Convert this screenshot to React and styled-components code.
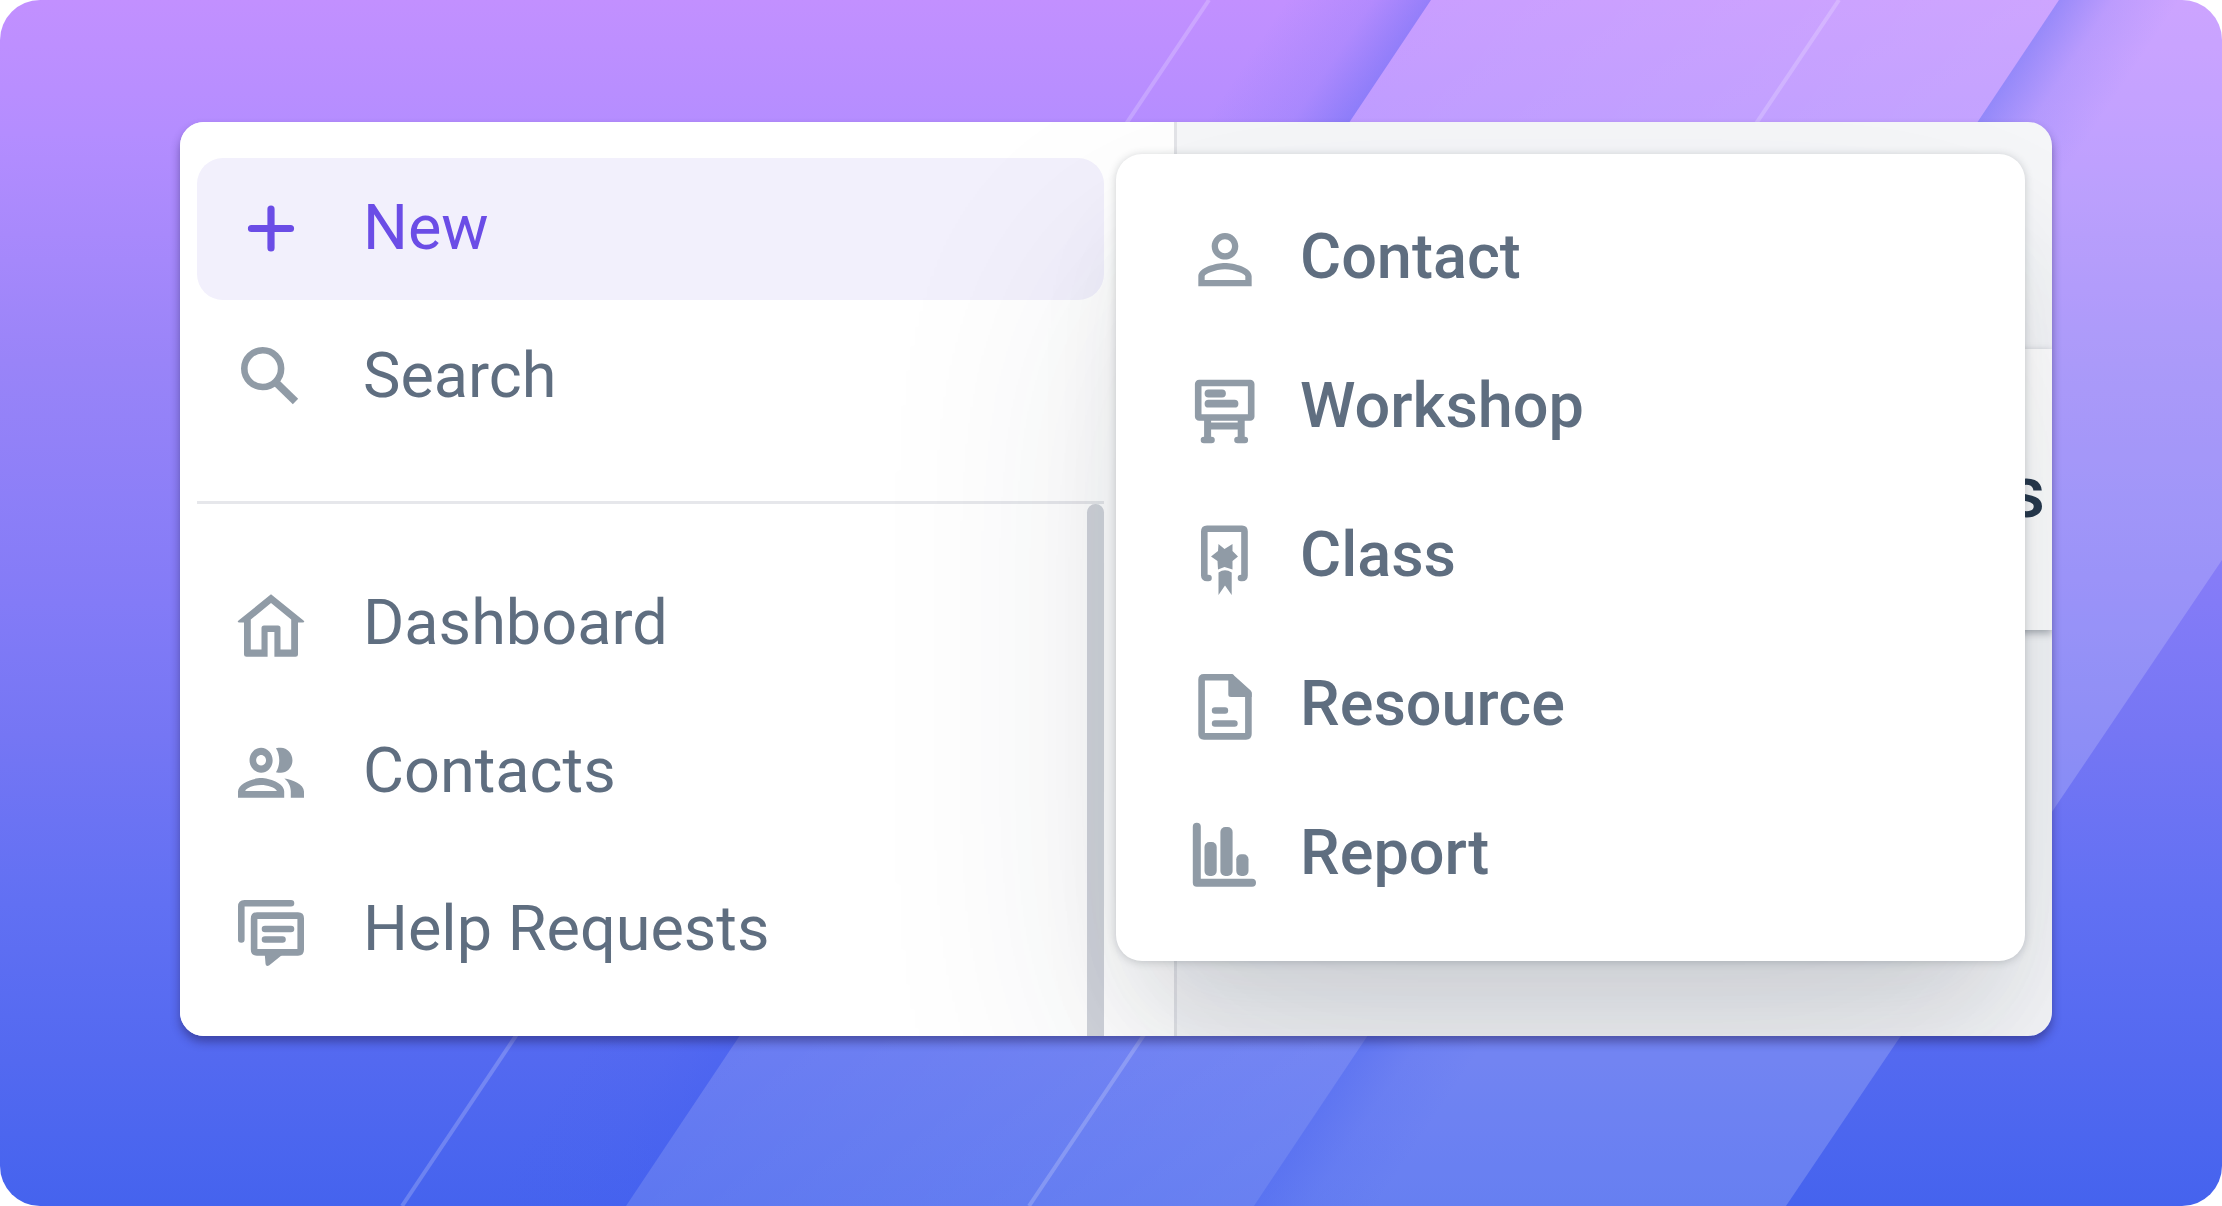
import React from "react";
import styled, { createGlobalStyle, css } from "styled-components";

const GlobalStyle = createGlobalStyle`
  *, *::before, *::after { box-sizing: border-box; }
  body {
    margin: 0;
    background: #ffffff;
    font-family: Roboto, "Liberation Sans", sans-serif;
  }
`;

const Stage = styled.div`
  position: relative;
  display: flex;
  min-height: 100vh;
  padding: 122px 170px 170px 180px;
  border-radius: 40px;
  overflow: hidden;
  background: linear-gradient(
    180deg,
    #c290ff 0%,
    #b48dff 11%,
    #9984f8 30%,
    #837bf7 50%,
    #7576f4 61%,
    #6170f3 75%,
    #5369f0 88%,
    #4563ee 100%
  );
`;

const Backdrop = styled.svg`
  position: absolute;
  inset: 0;
  width: 100%;
  height: 100%;
`;

const Frame = styled.div`
  flex: 1;
  border-radius: 24px;
  box-shadow: 0 6px 10px rgba(30, 25, 80, 0.45);
  position: relative;
  display: flex;
`;

const Window = styled.div`
  position: relative;
  flex: 1;
  display: grid;
  grid-template-columns: 997fr 875fr;
  border-radius: 24px;
  overflow: hidden;
  background: #f6f7f9;
`;

const Sidebar = styled.aside`
  display: flex;
  flex-direction: column;
  padding: 36px 70px 0 17px;
  background: #ffffff;
  border-right: 3px solid #e3e4e8;
`;

const Actions = styled.div`
  display: flex;
  flex-direction: column;
  gap: 6px;
  padding-bottom: 53px;
  border-bottom: 3px solid #e6e7eb;
`;

const rowBase = css`
  display: flex;
  align-items: center;
  width: 100%;
  border: 0;
  background: transparent;
  font-family: inherit;
  font-size: 63px;
  line-height: 72px;
  color: #5f6e80;
  text-align: left;
  text-decoration: none;
  white-space: nowrap;
  cursor: pointer;
`;

const SideRow = styled.button`
  ${rowBase}
  gap: 52px;
  height: 142px;
  padding: 0 34px 2px;
  border-radius: 26px;
  ${(p) => p.$active && css`
    background: #f2f0fc;
    color: #6b4de6;
  `}
`;

const NavScroll = styled.div`
  flex: 1;
  display: flex;
`;

const Nav = styled.nav`
  flex: 1;
  display: flex;
  flex-direction: column;
  gap: 6px;
  padding: 49px 0 35px;
`;

const NavGroup = styled.div`
  display: flex;
  flex-direction: column;
  gap: 6px;
  padding-bottom: 10px;
`;

const ScrollThumb = styled.div`
  width: 17px;
  border-radius: 9px 9px 0 0;
  background: #d1d4db;
`;

const Content = styled.main`
  padding-top: 227px;
`;

const StatCard = styled.section`
  display: flex;
  align-items: center;
  justify-content: flex-end;
  height: 281px;
  padding: 6px 7px 0;
  background: #ffffff;
  box-shadow: 0 3px 8px rgba(40, 50, 65, 0.4);
`;

const StatTitle = styled.h2`
  margin: 0;
  font-size: 72px;
  line-height: 84px;
  font-weight: 500;
  color: #26384c;
`;

const Menu = styled.div`
  position: absolute;
  top: 32px;
  left: 50%;
  right: 27px;
  padding: 28px 0 34px;
  border-radius: 26px;
  background: #ffffff;
  box-shadow:
    0 1px 8px rgba(40, 50, 60, 0.22),
    0 70px 100px -30px rgba(40, 50, 60, 0.13),
    0 120px 320px rgba(40, 50, 60, 0.11);
`;

const MenuRow = styled.button`
  ${rowBase}
  gap: 35px;
  height: 149px;
  padding: 0 69px;
  font-weight: 500;
`;

const Glyph = styled.svg`
  flex: none;
  width: 80px;
  height: 80px;
  overflow: visible;
  color: ${(p) => (p.$accent ? "#6b4de6" : "#909ba6")};
`;

function Icon({ accent, children }) {
  return (
    <Glyph
      $accent={accent}
      viewBox="0 0 80 80"
      fill="none"
      stroke="currentColor"
      strokeWidth="6.6"
      strokeLinecap="round"
      strokeLinejoin="round"
      aria-hidden="true"
    >
      {children}
    </Glyph>
  );
}

const PlusIcon = () => (
  <Icon accent>
    <path d="M40 21V60M20.500 40.500H59.500" strokeWidth="7.2" />
  </Icon>
);

const SearchIcon = () => (
  <Icon>
    <circle cx="31.700" cy="32.600" r="18.400" />
    <path d="M45.500 47L64.500 65.500" strokeLinecap="butt" strokeWidth="7.600" />
  </Icon>
);

const HomeIcon = () => (
  <Icon>
    <path
      fill="currentColor"
      stroke="none"
      fillRule="evenodd"
      d="M40 11.3L72.5 37.5Q74.5 39.5 71.500 39.500H67V71.500Q67 73.700 64.500 73.700H43.400V49H36.600V73.700H15.500Q13 73.700 13 71.500V39.500H8.500Q5.500 39.500 7.500 37.500ZM40 20L19.800 36.500V66.500H30.500V45Q30.500 42.500 33 42.500H47Q49.500 42.500 49.500 45V66.500H60.200V36.500Z"
    />
  </Icon>
);

const PeopleIcon = () => (
  <Icon>
    <path
      fill="currentColor"
      stroke="none"
      transform="translate(0.4 -1.1) scale(3.3 3.57)"
      d="M9 13.5c-2.340 0-7 1.400-7 3.750V19h14v-1.750c0-2.350-4.660-3.750-7-3.750zM4.200 17.100c.5-1 2.900-1.700 4.800-1.700s4.300.7 4.800 1.700H4.200zM9 12c1.930 0 3.500-1.570 3.500-3.500S10.930 5 9 5 5.500 6.570 5.500 8.500 7.070 12 9 12zm0-5c.83 0 1.500.67 1.500 1.500S9.830 10 9 10s-1.500-.67-1.500-1.500S8.170 7 9 7zm7.040 6.610c1.160.84 1.960 2.160 1.960 3.640V19h4v-1.750c0-2.020-3.500-3.370-5.960-3.640zM15 12c1.930 0 3.500-1.570 3.500-3.500S16.930 5 15 5c-.54 0-1.040.03-1.500.15.63.89 1 2.180 1 3.350s-.37 2.460-1 3.350c.46.12.96.15 1.500.15z"
    />
  </Icon>
);

const ChatIcon = () => (
  <Icon>
    <path d="M60 14.3H13.500Q10.300 14.300 10.300 17.500V50.500" />
    <path d="M26 26.600H67Q69.700 26.600 69.700 29.500V60.500Q69.700 63.400 67 63.400H26Q23.100 63.400 23.100 60.500V29.500Q23.100 26.600 26 26.600Z" />
    <path fill="currentColor" stroke="none" d="M33.500 62H56L38 76.500Q34.500 78 34.500 74.500Z" />
    <path d="M34 40H60M34 50.500H51.500" />
  </Icon>
);

const PersonIcon = () => (
  <Icon>
    <path
      fill="currentColor"
      stroke="none"
      transform="translate(0 2.6) scale(3.333)"
      d="M12 5.900c1.160 0 2.100.94 2.100 2.100s-.94 2.100-2.100 2.100S9.900 9.160 9.900 8s.94-2.100 2.100-2.100m0 9c2.970 0 6.100 1.460 6.100 2.100v1.100H5.900V17c0-.64 3.130-2.100 6.100-2.100M12 4C9.790 4 8 5.790 8 8s1.790 4 4 4 4-1.790 4-4-1.790-4-4-4zm0 9c-2.670 0-8 1.340-8 4v3h16v-3c0-2.660-5.330-4-8-4z"
    />
  </Icon>
);

const WorkshopIcon = () => (
  <Icon>
    <rect x="13.200" y="17" width="53" height="34.500" rx="1" />
    <path d="M23.500 27.500H37M23.500 37.700H49.500" strokeWidth="7.800" />
    <path d="M22.600 52V75M56.200 52V75M23 60H56" strokeLinecap="butt" strokeWidth="7" />
    <path d="M19 74H26.500M52.500 74H59.800" strokeWidth="6.600" />
  </Icon>
);

const ClassIcon = () => (
  <Icon>
    <path d="M23.500 63H22Q19.300 63 19.300 60.500V16.500Q19.300 13.800 22 13.800H57Q59.500 13.800 59.500 16.500V60.500Q59.500 63 57 63H56" />
    <path
      fill="currentColor"
      stroke="none"
      d="M33.500 29L39.500 34L47.500 29V36L53 41.500L47.500 46L47.500 54.500L39.500 52L33 54.500L32.500 46L26 41.500L33 36Z"
    />
    <path fill="currentColor" stroke="none" d="M33.500 57.500Q40 53 46.700 57.500V80L40 70.500L33.500 80Z" />
  </Icon>
);

const ResourceIcon = () => (
  <Icon>
    <path d="M46 13.200H19Q16.600 13.200 16.600 15.600V70Q16.600 72.400 19 72.400H61Q63.400 72.400 63.400 70V30" />
    <path fill="currentColor" stroke="none" d="M43.300 9.900H46Q47.500 9.900 48.500 10.900L65.700 26.600Q66.700 27.600 66.700 29.600V33H46Q43.300 33 43.300 30.500Z" />
    <path d="M30 46.500H40M30 59.500H49.500" strokeWidth="6.400" />
  </Icon>
);

const ReportIcon = () => (
  <Icon>
    <path d="M11.800 13.800V69.800H67" strokeWidth="8" />
    <g fill="currentColor" stroke="none">
      <rect x="19.500" y="29" width="12.200" height="34" rx="5" />
      <rect x="35.400" y="14" width="12.200" height="49" rx="5" />
      <rect x="51.300" y="41.300" width="12.200" height="21.700" rx="5" />
    </g>
  </Icon>
);

const MENU_ITEMS = [
  ["Contact", PersonIcon],
  ["Workshop", WorkshopIcon],
  ["Class", ClassIcon],
  ["Resource", ResourceIcon],
  ["Report", ReportIcon],
];

function DiagonalBackdrop() {
  return (
    <Backdrop viewBox="0 0 2222 1206" preserveAspectRatio="none" aria-hidden="true">
      <defs>
        <linearGradient id="shadeLeft" gradientUnits="userSpaceOnUse" x1="1431" y1="0" x2="1331" y2="-67">
          <stop offset="0" stopColor="#4560f0" stopOpacity="0.36" />
          <stop offset="0.4" stopColor="#4560f0" stopOpacity="0.12" />
          <stop offset="1" stopColor="#4560f0" stopOpacity="0" />
        </linearGradient>
        <linearGradient id="shadeRight" gradientUnits="userSpaceOnUse" x1="2059" y1="0" x2="2143" y2="56">
          <stop offset="0" stopColor="#4560f0" stopOpacity="0.38" />
          <stop offset="0.45" stopColor="#4560f0" stopOpacity="0.12" />
          <stop offset="1" stopColor="#4560f0" stopOpacity="0" />
        </linearGradient>
        <linearGradient id="bandLight" gradientUnits="userSpaceOnUse" x1="1431" y1="0" x2="1865" y2="290">
          <stop offset="0" stopColor="#ffffff" stopOpacity="0.13" />
          <stop offset="1" stopColor="#ffffff" stopOpacity="0.19" />
        </linearGradient>
      </defs>
      <polygon points="1251,0 1431,0 626,1206 446,1206" fill="url(#shadeLeft)" />
      <polygon points="1431,0 2059,0 1254,1206 626,1206" fill="url(#bandLight)" />
      <polygon points="2059,0 2222,0 2222,560 1786,1206 1254,1206" fill="#ffffff" fillOpacity="0.18" />
      <polygon points="2059,0 2222,0 2222,20 1430,1206 1254,1206" fill="url(#shadeRight)" />
      <g stroke="#ffffff" strokeOpacity="0.2" strokeWidth="4">
        <path d="M1209 0L402 1206" />
        <path d="M1839 0L1029 1206" />
      </g>
    </Backdrop>
  );
}

export default function App() {
  return (
    <>
      <GlobalStyle />
      <Stage>
        <DiagonalBackdrop />
        <Frame>
          <Window>
            <Sidebar>
              <Actions>
                <SideRow type="button" $active aria-haspopup="menu" aria-expanded="true">
                  <PlusIcon />
                  New
                </SideRow>
                <SideRow type="button">
                  <SearchIcon />
                  Search
                </SideRow>
              </Actions>
              <NavScroll>
                <Nav aria-label="Main">
                  <NavGroup>
                    <SideRow as="a" href="#dashboard">
                      <HomeIcon />
                      Dashboard
                    </SideRow>
                    <SideRow as="a" href="#contacts">
                      <PeopleIcon />
                      Contacts
                    </SideRow>
                  </NavGroup>
                  <SideRow as="a" href="#help-requests">
                    <ChatIcon />
                    Help Requests
                  </SideRow>
                </Nav>
                <ScrollThumb />
              </NavScroll>
            </Sidebar>
            <Content>
              <StatCard>
                <StatTitle>s</StatTitle>
              </StatCard>
            </Content>
            <Menu role="menu" aria-label="New">
              {MENU_ITEMS.map(([label, ItemIcon]) => (
                <MenuRow key={label} type="button" role="menuitem">
                  <ItemIcon />
                  {label}
                </MenuRow>
              ))}
            </Menu>
          </Window>
        </Frame>
      </Stage>
    </>
  );
}
